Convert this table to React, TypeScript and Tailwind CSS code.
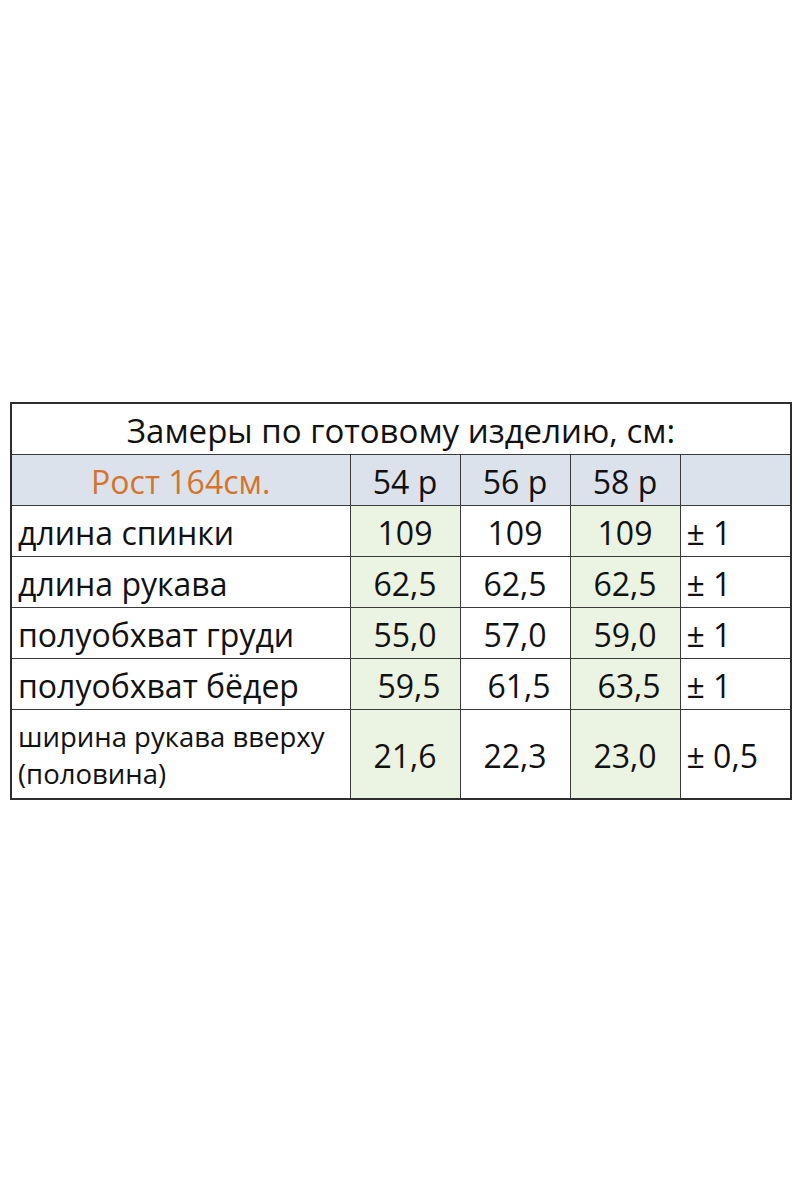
import React from 'react';

type Row = {
  label: string;
  values: string[];
  shift?: boolean;
  tol: string;
  tall?: boolean;
};

const rows: Row[] = [
  { label: 'длина спинки', values: ['109', '109', '109'], tol: '± 1' },
  { label: 'длина рукава', values: ['62,5', '62,5', '62,5'], tol: '± 1' },
  { label: 'полуобхват груди', values: ['55,0', '57,0', '59,0'], tol: '± 1' },
  { label: 'полуобхват бёдер', values: ['59,5', '61,5', '63,5'], tol: '± 1', shift: true },
  { label: 'ширина рукава вверху (половина)', values: ['21,6', '22,3', '23,0'], tol: '± 0,5', tall: true },
];

const font = { fontFamily: '"Open Sans", "Noto Sans", sans-serif' };

export default function App() {
  return (
    <div className="w-[800px] h-[1200px] bg-white pt-[402px] pl-[10px]" style={font}>
      <table className="border-collapse border-2 border-[#2e2e2e] text-[#111] table-fixed w-[780px]">
        <colgroup>
          <col className="w-[339px]" />
          <col className="w-[110px]" />
          <col className="w-[110px]" />
          <col className="w-[110px]" />
          <col className="w-[111px]" />
        </colgroup>
        <tbody>
          <tr className="h-[51px]">
            <td colSpan={5} className="text-center text-[33px] leading-none border border-[#3a3a3a] pt-1">
              Замеры по готовому изделию, см:
            </td>
          </tr>
          <tr className="h-[51px] bg-[#dbe2ec]">
            <td className="text-center text-[32px] leading-none text-[#d6732a] border border-[#3a3a3a] pt-1">
              Рост 164см.
            </td>
            <td className="text-center text-[32px] leading-none border border-[#3a3a3a] pt-1">54 р</td>
            <td className="text-center text-[32px] leading-none border border-[#3a3a3a] pt-1">56 р</td>
            <td className="text-center text-[32px] leading-none border border-[#3a3a3a] pt-1">58 р</td>
            <td className="border border-[#3a3a3a]"></td>
          </tr>
          {rows.map((r) => (
            <tr key={r.label} className={r.tall ? 'h-[90px]' : 'h-[51px]'}>
              <td
                className={
                  r.tall
                    ? 'border border-[#3a3a3a] pl-[6px] text-[27.5px] leading-[37px] pt-[2px]'
                    : 'border border-[#3a3a3a] pl-[6px] text-[32px] leading-none pt-1'
                }
              >
                {r.tall ? (
                  <>
                    ширина рукава вверху
                    <br />
                    (половина)
                  </>
                ) : (
                  r.label
                )}
              </td>
              {r.values.map((v, i) => (
                <td
                  key={i}
                  className={
                    (i === 1 ? 'bg-white ' : 'bg-[#ebf3e3] ') +
                    (r.shift ? 'pl-[8px] ' : '') +
                    'border border-[#3a3a3a] text-center text-[32px] leading-none pt-1'
                  }
                >
                  {v}
                </td>
              ))}
              <td className="border border-[#3a3a3a] pl-[6px] text-[32px] leading-none pt-1">{r.tol}</td>
            </tr>
          ))}
        </tbody>
      </table>
    </div>
  );
}
